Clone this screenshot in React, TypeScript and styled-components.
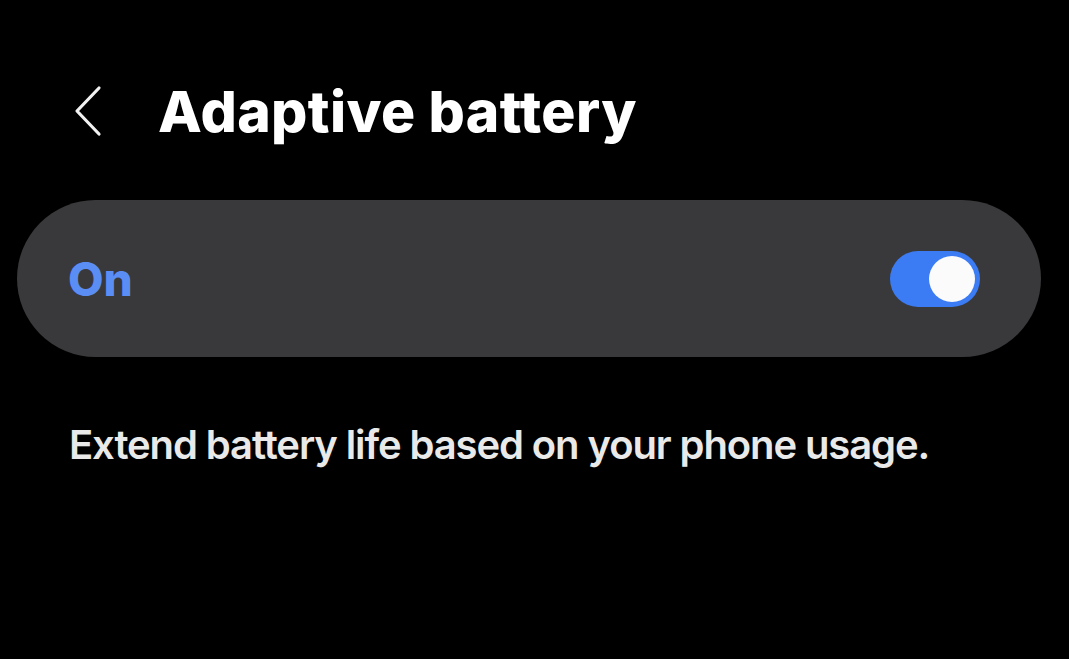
import React, { useState } from 'react';
import styled, { createGlobalStyle } from 'styled-components';

const GlobalStyle = createGlobalStyle`
  html, body {
    margin: 0;
    padding: 0;
    background: #000;
  }
  body {
    font-family: Inter, "Noto Sans", "Liberation Sans", sans-serif;
    width: 1069px;
    height: 659px;
    overflow: hidden;
  }
`;

const Screen = styled.div`
  display: flex;
  flex-direction: column;
  padding: 0 28px 0 17px;
  color: #fff;
`;

const Header = styled.div`
  display: flex;
  align-items: center;
  height: 200px;
  padding: 22px 0 0 54px;
  box-sizing: border-box;
`;

const BackButton = styled.button`
  display: flex;
  align-items: center;
  justify-content: center;
  width: 34px;
  height: 52px;
  padding: 0;
  margin-right: 53px;
  background: none;
  border: none;
  cursor: pointer;
`;

const Title = styled.h1`
  margin: 0;
  font-size: 57px;
  font-weight: 800;
  letter-spacing: 0.4px;
  color: #fff;
`;

const ToggleCard = styled.div`
  display: flex;
  align-items: center;
  justify-content: space-between;
  height: 157px;
  padding: 0 61px 0 51px;
  background: #39393b;
  border-radius: 79px;
`;

const StateLabel = styled.span<{ $on: boolean }>`
  font-size: 46px;
  font-weight: 800;
  color: ${p => (p.$on ? '#5b8ef5' : '#d0d0d0')};
`;

const Switch = styled.button<{ $on: boolean }>`
  display: flex;
  align-items: center;
  justify-content: ${p => (p.$on ? 'flex-end' : 'flex-start')};
  width: 90px;
  height: 56px;
  padding: 0 5px;
  box-sizing: border-box;
  border: none;
  border-radius: 28px;
  background: ${p => (p.$on ? '#3b7cf4' : '#6b6b6b')};
  cursor: pointer;
`;

const Knob = styled.span`
  width: 46px;
  height: 46px;
  border-radius: 50%;
  background: #fbfbfb;
`;

const Description = styled.p`
  margin: 63px 0 0 52px;
  font-size: 40px;
  font-weight: 600;
  letter-spacing: -1.1px;
  color: #e9e9e9;
`;

export default function App() {
  const [on, setOn] = useState(true);

  return (
    <>
      <GlobalStyle />
      <Screen>
        <Header>
          <BackButton aria-label="Back">
            <svg width="34" height="52" viewBox="0 0 34 52" fill="none">
              <path d="M28 3 L6 26 L28 49" stroke="#f2f2f2" strokeWidth="3.2" strokeLinecap="round" strokeLinejoin="round" />
            </svg>
          </BackButton>
          <Title>Adaptive battery</Title>
        </Header>
        <ToggleCard>
          <StateLabel $on={on}>{on ? 'On' : 'Off'}</StateLabel>
          <Switch $on={on} onClick={() => setOn(v => !v)} aria-label="Toggle adaptive battery">
            <Knob />
          </Switch>
        </ToggleCard>
        <Description>Extend battery life based on your phone usage.</Description>
      </Screen>
    </>
  );
}
